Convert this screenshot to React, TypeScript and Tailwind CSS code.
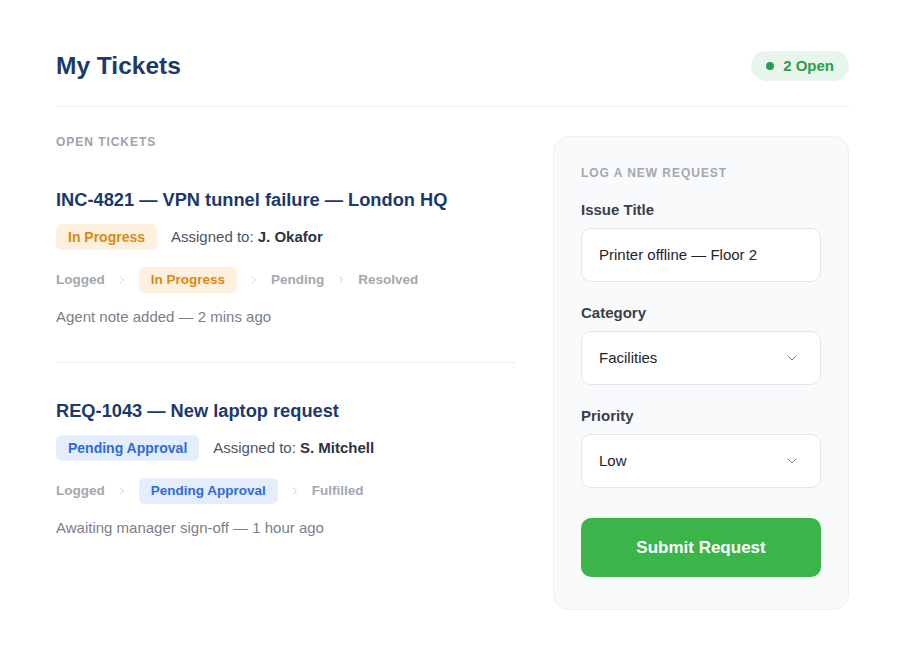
import { ChevronDown, ChevronRight } from "lucide-react";

type Tone = "amber" | "blue";

const toneClass: Record<Tone, string> = {
  amber: "bg-[#fdf0de] text-[#d98a0f]",
  blue: "bg-[#e3edfc] text-[#2f6bd8]",
};

type Ticket = {
  title: string;
  status: string;
  tone: Tone;
  assignee: string;
  steps: string[];
  note: string;
};

const tickets: Ticket[] = [
  {
    title: "INC-4821 — VPN tunnel failure — London HQ",
    status: "In Progress",
    tone: "amber",
    assignee: "J. Okafor",
    steps: ["Logged", "In Progress", "Pending", "Resolved"],
    note: "Agent note added — 2 mins ago",
  },
  {
    title: "REQ-1043 — New laptop request",
    status: "Pending Approval",
    tone: "blue",
    assignee: "S. Mitchell",
    steps: ["Logged", "Pending Approval", "Fulfilled"],
    note: "Awaiting manager sign-off — 1 hour ago",
  },
];

function TicketRow({ t, last }: { t: Ticket; last: boolean }) {
  return (
    <div className={`pt-9 ${last ? "" : "pb-[35px] border-b border-[#eceef1]"}`}>
      <h2 className="text-[18.25px] leading-6 font-bold text-[#1b3a6b]">{t.title}</h2>
      <div className="mt-3 flex items-center gap-[14px]">
        <span className={`h-[26px] px-3 rounded-md flex items-center text-[14px] font-bold ${toneClass[t.tone]}`}>
          {t.status}
        </span>
        <span className="text-[15px] text-[#4b5563]">
          Assigned to: <b className="text-[#2d3440]">{t.assignee}</b>
        </span>
      </div>
      <div className="mt-[17px] flex items-center gap-[11px] text-[13.5px] font-bold text-[#a3a8b1]">
        {t.steps.map((s, i) => (
          <div key={s} className="flex items-center gap-[11px]">
            {i > 0 && <ChevronRight size={12} strokeWidth={1.75} className="text-[#c3c7ce]" />}
            {s === t.status ? (
              <span className={`h-[26px] px-3 rounded-md flex items-center ${toneClass[t.tone]}`}>{s}</span>
            ) : (
              <span>{s}</span>
            )}
          </div>
        ))}
      </div>
      <p className="mt-[14px] text-[15px] leading-5 text-[#7a808a]">{t.note}</p>
    </div>
  );
}

function Field({ label, children }: { label: string; children: React.ReactNode }) {
  return (
    <div>
      <div className="text-[15px] leading-[18px] font-bold text-[#3a404b] mb-[9px]">{label}</div>
      {children}
    </div>
  );
}

function SelectBox({ value }: { value: string }) {
  return (
    <div className="h-[54px] rounded-[10px] border border-[#e3e6ea] bg-white px-[17px] flex items-center justify-between text-[15px] text-[#1f2329]">
      <span>{value}</span>
      <ChevronDown size={16} strokeWidth={1.5} className="text-[#7b818b] mr-[3px]" />
    </div>
  );
}

export default function App() {
  return (
    <div className="min-h-screen bg-white pl-14 pr-[51px] pt-[50px]" style={{ fontFamily: '"Liberation Sans", Arial, sans-serif' }}>
      <header className="flex items-center justify-between pb-6 border-b border-[#eceef1]">
        <h1 className="text-[24.5px] leading-8 font-bold text-[#1b3a6b]">My Tickets</h1>
        <div className="h-[30px] px-[15px] rounded-full bg-[#e8f5ec] flex items-center gap-[9px] text-[15px] font-bold text-[#2a9d4a]">
          <span className="w-2 h-2 rounded-full bg-[#2a9d4a]" />
          2 Open
        </div>
      </header>

      <div className="mt-[29px] flex gap-[37px]">
        <section className="w-[460px] shrink-0">
          <div className="text-[12px] leading-3 font-bold tracking-[0.08em] text-[#9ca3ad] mb-1">OPEN TICKETS</div>
          {tickets.map((t, i) => (
            <TicketRow key={t.title} t={t} last={i === tickets.length - 1} />
          ))}
        </section>

        <aside className="w-[296px] shrink-0 rounded-2xl border border-[#eef0f3] bg-[#f8fafc] px-[27px] pt-[28px] pb-8">
          <div className="text-[12px] leading-4 font-bold tracking-[0.08em] text-[#a3a8b1] mb-5">LOG A NEW REQUEST</div>
          <div className="flex flex-col gap-[22px]">
            <Field label="Issue Title">
              <div className="h-[54px] rounded-[10px] border border-[#e3e6ea] bg-white px-[17px] flex items-center text-[15px] text-[#1f2329]">
                Printer offline — Floor 2
              </div>
            </Field>
            <Field label="Category">
              <SelectBox value="Facilities" />
            </Field>
            <Field label="Priority">
              <SelectBox value="Low" />
            </Field>
          </div>
          <button className="mt-[30px] w-full h-[59px] rounded-[10px] bg-[#3bb54a] text-white text-[17px] font-bold">
            Submit Request
          </button>
        </aside>
      </div>
    </div>
  );
}
